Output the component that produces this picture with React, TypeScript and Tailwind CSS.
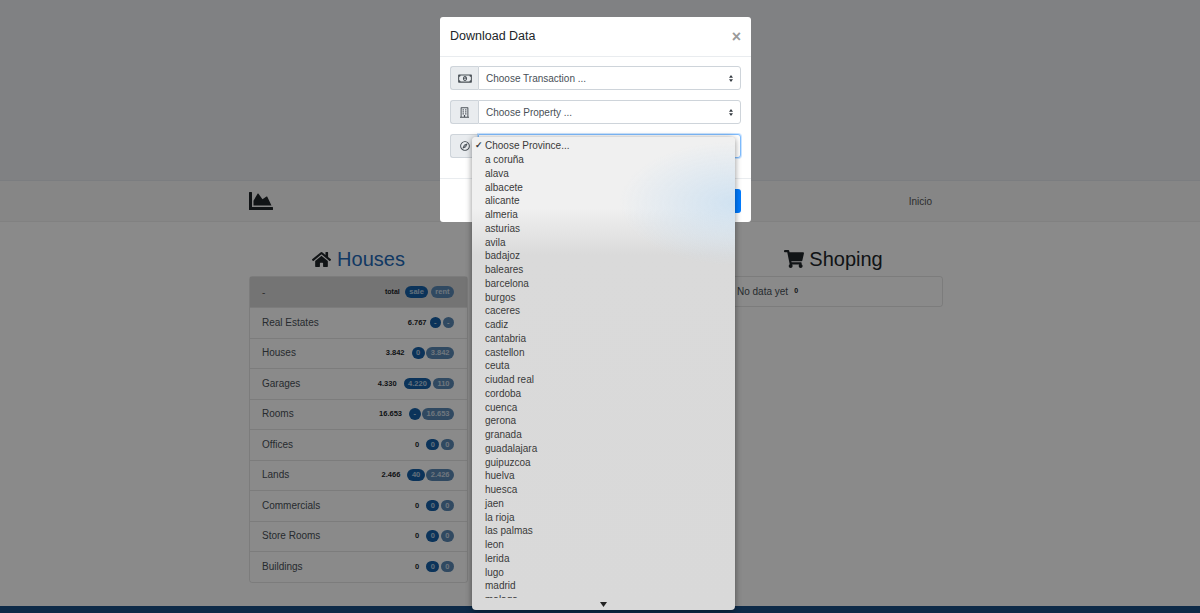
import React from 'react'
import { FaChartArea, FaHome, FaRegMoneyBillAlt, FaRegBuilding, FaRegCompass, FaShoppingCart } from 'react-icons/fa'

const ROWS = [
  { name: 'Real Estates', total: '6.767', sale: '-', rent: '-', gap: 'gap-[3px]' },
  { name: 'Houses', total: '3.842', sale: '0', rent: '3.842', gap: 'gap-[7px]' },
  { name: 'Garages', total: '4.330', sale: '4.220', rent: '110', gap: 'gap-[7px]' },
  { name: 'Rooms', total: '16.653', sale: '-', rent: '16.653', gap: 'gap-[7px]' },
  { name: 'Offices', total: '0', sale: '0', rent: '0', gap: 'gap-[7px]' },
  { name: 'Lands', total: '2.466', sale: '40', rent: '2.426', gap: 'gap-[7px]' },
  { name: 'Commercials', total: '0', sale: '0', rent: '0', gap: 'gap-[7px]' },
  { name: 'Store Rooms', total: '0', sale: '0', rent: '0', gap: 'gap-[7px]' },
  { name: 'Buildings', total: '0', sale: '0', rent: '0', gap: 'gap-[7px]' },
]

const PROVINCES = [
  'a coruña', 'alava', 'albacete', 'alicante', 'almeria', 'asturias', 'avila', 'badajoz',
  'baleares', 'barcelona', 'burgos', 'caceres', 'cadiz', 'cantabria', 'castellon', 'ceuta',
  'ciudad real', 'cordoba', 'cuenca', 'gerona', 'granada', 'guadalajara', 'guipuzcoa', 'huelva',
  'huesca', 'jaen', 'la rioja', 'las palmas', 'leon', 'lerida', 'lugo', 'madrid', 'malaga',
]

const Badge = ({ kind, children }: { kind: 'sale' | 'rent'; children: React.ReactNode }) => (
  <span
    className={
      'flex h-[11.5px] min-w-[11px] items-center justify-center rounded-full px-[4.5px] text-[7.5px] font-bold text-white/70 ' +
      (kind === 'sale' ? 'bg-[#155fa6]' : 'bg-[#5a88b4]')
    }
  >
    {children}
  </span>
)

const Arrows = () => (
  <svg width="4" height="7" viewBox="0 0 4 7" className="shrink-0 fill-[#343a40]">
    <path d="M2 0 4 2.7H0zM2 7 0 4.3h4z" />
  </svg>
)

const SelectRow = ({ icon, label, focus }: { icon: React.ReactNode; label?: string; focus?: boolean }) => (
  <div className="flex h-[24px]">
    <div className="flex w-[28px] items-center justify-center rounded-l-[3px] border border-r-0 border-[#ced4da] bg-[#e9ecef] text-[#495057]">
      {icon}
    </div>
    <div
      className={
        'flex flex-1 items-center justify-between rounded-r-[3px] border bg-white pl-[7px] pr-[7px] text-[10px] text-[#495057] ' +
        (focus ? 'border-[#80bdff] shadow-[0_0_0_1px_rgba(0,123,255,0.2)]' : 'border-[#ced4da]')
      }
    >
      <span>{label}</span>
      <Arrows />
    </div>
  </div>
)

const ProvinceMenu = () => (
  <div className="absolute left-[471.5px] top-[136.5px] flex h-[473.5px] w-[263.5px] flex-col overflow-hidden rounded-[4px] bg-[radial-gradient(ellipse_115px_62px_at_100%_14%,#d0e2f1_0%,rgba(208,226,241,0)_100%),linear-gradient(to_bottom,#f0f0f0_0%,#f0f0f0_15%,#dadada_25%,#d9d9d9_100%)] pt-[2.5px] text-[10px] text-[#3a3a3a] shadow-[0_1px_6px_rgba(0,0,0,0.45)]">
    <div className="flex-1 overflow-hidden">
      <div className="relative flex h-[13.75px] items-center pl-[13.5px]">
        <span className="absolute left-[3px] text-[9px] font-bold">✓</span>
        Choose Province...
      </div>
      {PROVINCES.map(p => (
        <div key={p} className="flex h-[13.75px] items-center pl-[13.5px]">
          {p}
        </div>
      ))}
    </div>
    <div className="flex h-[12px] shrink-0 items-center justify-center">
      <svg width="7" height="5" viewBox="0 0 7 5" className="fill-[#222]">
        <path d="M0 0h7L3.5 5z" />
      </svg>
    </div>
  </div>
)

export default function App() {
  return (
    <div className="relative flex h-[613px] w-[1200px] flex-col overflow-hidden bg-white font-['Liberation_Sans',Arial,sans-serif] text-[#212529]">
      <div className="h-[181px] shrink-0 border-b border-[#e4e8ec] bg-[#eceef2]" />

      <nav className="flex h-[41px] shrink-0 items-center border-b border-[#eeeeee] bg-[#f8f8f8] pl-[249px] pr-[268px]">
        <FaChartArea className="h-[24px] w-[24px] text-[#212529]" />
        <span className="ml-auto text-[10px] text-[#555]">Inicio</span>
      </nav>

      <main className="ml-[249px] grid grid-cols-[219px_219px_219px] gap-x-[18.5px] pt-[25px]">
        <section>
          <h2 className="mb-[5px] flex h-[24px] items-center justify-center gap-[6px] text-[20px] text-[#1f69b8]">
            <FaHome className="h-[17px] w-[19px] text-[#212529]" />
            Houses
          </h2>
          <ul className="rounded-[3px] border border-black/10">
            <li className="flex h-[30px] items-center justify-between bg-[#d6d6d6] pl-[12px] pr-[13px]">
              <span className="text-[10px] text-[#555]">-</span>
              <span className="flex items-center gap-[5px] text-[7px] font-bold">
                total
                <span className="flex gap-[2.5px]">
                  <Badge kind="sale">sale</Badge>
                  <Badge kind="rent">rent</Badge>
                </span>
              </span>
            </li>
            {ROWS.map(r => (
              <li key={r.name} className="flex h-[30.5px] items-center justify-between border-t border-black/10 pb-[1px] pl-[12px] pr-[13px]">
                <span className="text-[10px] text-[#495057]">{r.name}</span>
                <span className={'flex items-center text-[7.5px] font-bold ' + r.gap}>
                  {r.total}
                  <span className="flex gap-[1.5px]">
                    <Badge kind="sale">{r.sale}</Badge>
                    <Badge kind="rent">{r.rent}</Badge>
                  </span>
                </span>
              </li>
            ))}
          </ul>
        </section>

        <section />

        <section>
          <h2 className="mb-[5px] flex h-[24px] items-center justify-center gap-[5px] text-[20px] text-[#212529]">
            <FaShoppingCart className="h-[18px] w-[20px]" />
            Shoping
          </h2>
          <div className="flex h-[31px] items-center gap-[6px] rounded-[3px] border border-black/10 pl-[12px]">
            <span className="text-[10px] text-[#495057]">No data yet</span>
            <span className="text-[7px] font-bold">0</span>
          </div>
        </section>
      </main>

      <footer className="mt-auto h-[7px] shrink-0 bg-[#184f85]" />

      {/* modal backdrop + dialog */}
      <div className="absolute inset-0 bg-black/[0.46]">
        <div className="ml-[440px] mt-[17px] h-[205px] w-[311px] rounded-[3px] bg-white">
          <div className="flex h-[40px] items-center justify-between border-b border-[#e9ecef] px-[10px]">
            <span className="text-[12.5px] text-[#212529]">Download Data</span>
            <span className="text-[16px] font-bold leading-none text-[#9a9a9a]">×</span>
          </div>
          <div className="flex h-[121.5px] flex-col gap-[10px] border-b border-[#e9ecef] px-[10px] pt-[9px]">
            <SelectRow icon={<FaRegMoneyBillAlt className="h-[11px] w-[14px]" />} label="Choose Transaction ..." />
            <SelectRow icon={<FaRegBuilding className="h-[11px] w-[9px]" />} label="Choose Property ..." />
            <SelectRow icon={<FaRegCompass className="h-[10px] w-[10px]" />} focus />
          </div>
          <div className="flex justify-end px-[10px] pt-[10px]">
            <button type="button" className="h-[24px] rounded-[3px] bg-[#007bff] px-[10px] text-[10px] text-white">
              Download Data
            </button>
          </div>
        </div>
      </div>

      <ProvinceMenu />
    </div>
  )
}
